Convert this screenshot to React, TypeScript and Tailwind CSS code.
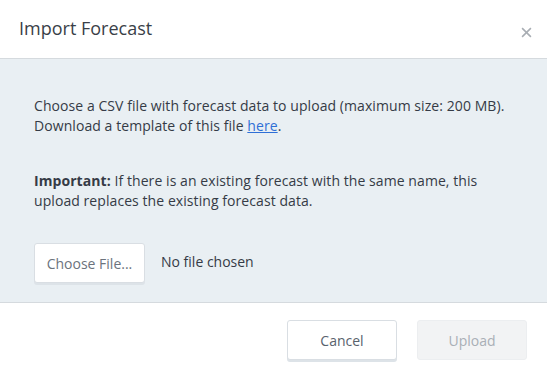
import React from 'react';

const App: React.FC = () => {
    return (
        <div className="w-[547px] h-[374px] bg-white overflow-hidden text-[#353b46]" style={{ fontFamily: '"Open Sans", sans-serif' }}>
            <div className="h-[59px] flex items-start justify-between pl-[19px] pr-[12px] border-b border-[#d5dade]">
                <h1 className="text-[18px] leading-[24px] mt-[16px] text-[#3a3f48]">Import Forecast</h1>
                <button className="mt-[23px] w-[18px] h-[18px] flex items-center justify-center text-[#a8adb3]">
                    <svg width="11" height="11" viewBox="0 0 10 10" fill="none" stroke="currentColor" strokeWidth="1.4">
                        <path d="M1 1L9 9M9 1L1 9" />
                    </svg>
                </button>
            </div>

            <div className="bg-[#e9eff3] h-[244px] px-[34px] pt-[37px] border-b border-[#d5dade]">
                <p className="text-[14px] leading-[20px] tracking-[0.005em]">
                    Choose a CSV file with forecast data to upload (maximum size: 200 MB).
                    <br />
                    Download a template of this file <a href="#" className="text-[#2f6fd6] underline">here</a>.
                </p>
                <p className="text-[14px] leading-[20px] mt-[35px] tracking-[0.005em]">
                    <strong className="font-bold">Important:</strong>{' '}If there is an existing forecast with the same name, this upload replaces the existing forecast data.
                </p>
                <div className="flex items-center mt-[32px]">
                    <button className="w-[111px] h-[40px] bg-white border border-[#d9dee3] rounded-[3px] shadow-[0_2px_0_#dde3e8] text-[14px] text-[#6b737d]">
                        Choose File...
                    </button>
                    <span className="ml-[16px] text-[14px] leading-[20px] -mt-[3px] text-[#353b46]">No file chosen</span>
                </div>
            </div>

            <div className="flex justify-end gap-[20px] pr-[20px] pt-[17px]">
                <button className="w-[110px] h-[40px] bg-white border border-[#d9dee3] rounded-[3px] shadow-[0_2px_0_#dde3e8] text-[14px] text-[#59626d]">
                    Cancel
                </button>
                <button className="w-[110px] h-[40px] bg-[#f2f3f4] border border-[#eceef0] rounded-[3px] text-[14px] text-[#a9afb6]">
                    Upload
                </button>
            </div>
        </div>
    );
};

export default App;
